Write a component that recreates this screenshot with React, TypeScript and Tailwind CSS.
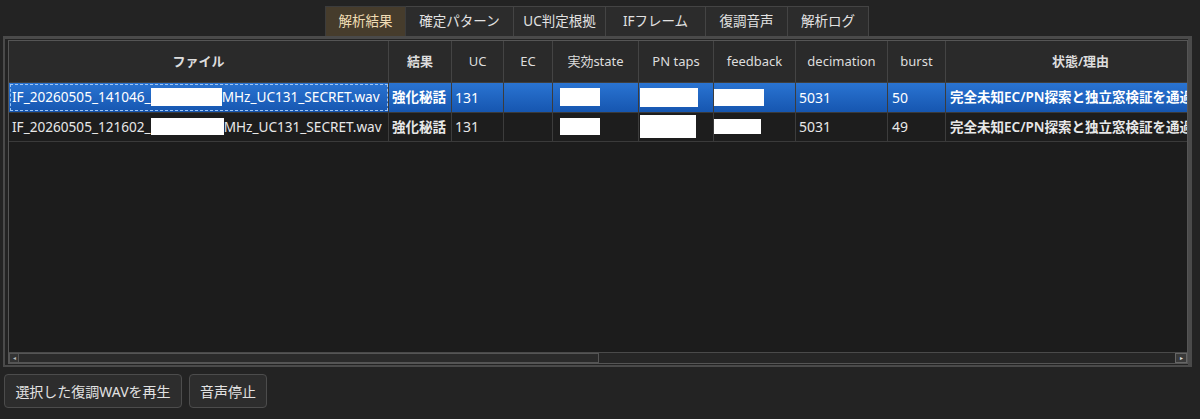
import React from 'react'

const font = { fontFamily: '"Noto Sans", "Noto Sans CJK JP", sans-serif' }

const tabs = ['解析結果', '確定パターン', 'UC判定根拠', 'IFフレーム', '復調音声', '解析ログ']
const tabWidths = ['w-[81px]', 'w-[108px]', 'w-[92px]', 'w-[100px]', 'w-[82px]', 'w-[81px]']

const cols = [
  { label: 'ファイル', w: 'w-[380px]', bold: true },
  { label: '結果', w: 'w-[63px]', bold: true },
  { label: 'UC', w: 'w-[52px]' },
  { label: 'EC', w: 'w-[49px]' },
  { label: '実効state', w: 'w-[86px]' },
  { label: 'PN taps', w: 'w-[75px]' },
  { label: 'feedback', w: 'w-[82px]' },
  { label: 'decimation', w: 'w-[92px]' },
  { label: 'burst', w: 'w-[58px]' },
  { label: '状態/理由', w: 'w-[270px]', bold: true },
]

const rows = [
  { time: '141046', burst: '50', selected: true, redact: ['w-[71px] h-[18px]', 'w-[40px] h-[18px]', 'w-[58px] h-[19px]', 'w-[50px] h-[17px]'] },
  { time: '121602', burst: '49', selected: false, redact: ['w-[73px] h-[17px]', 'w-[40px] h-[17px]', 'w-[56px] h-[23px]', 'w-[47px] h-[15px]'] },
]

function Blank({ cls }: { cls: string }) {
  return <span className={`inline-block bg-white align-middle ${cls}`} />
}

export default function App() {
  return (
    <div className="w-[1200px] h-[419px] bg-[#232323] text-[#e4e4e4] text-[13px] overflow-hidden" style={font}>
      {/* tabs */}
      <div className="flex pl-[325px] pt-[6px] h-[36px]">
        {tabs.map((t, i) => (
          <div
            key={t}
            className={`${tabWidths[i]} flex items-center justify-center border border-b-0 text-[13.5px] ${
              i === 0
                ? 'bg-[#463c2c] text-[#f0dcb4] border-[#3c3c3c]'
                : 'bg-[#2c2c2c] text-[#e2e2e2] border-[#444444] border-l-0'
            }`}
          >
            {t}
          </div>
        ))}
      </div>

      {/* pane */}
      <div className="ml-[3px] w-[1189px] h-[331px] border-t-[3px] border-l-[2px] border-r-[4px] border-b-[2px] border-[#4a4a4a] bg-[#232323] pt-[1px] pl-[3px] pr-0">
        <div className="w-[1180px] h-[324px] border border-[#555] bg-[#1c1c1c] flex flex-col overflow-hidden">
          {/* header */}
          <div className="flex h-[42px] bg-[#2a2a2a] border-b border-[#3e3e3e] shrink-0">
            {cols.map((c) => (
              <div
                key={c.label}
                className={`${c.w} shrink-0 flex items-center justify-center border-r border-[#444] text-[#dddddd] ${c.bold ? 'font-semibold' : ''}`}
              >
                {c.label}
              </div>
            ))}
          </div>

          {/* rows */}
          {rows.map((r) => (
            <div
              key={r.time}
              className={`flex h-[29.5px] shrink-0 border-b border-[#3a3a3a] text-[14px] ${
                r.selected ? 'bg-gradient-to-b from-[#2a74d2] to-[#1656b0] text-white' : 'bg-[#1d1d1d] text-[#e8e8e8]'
              }`}
            >
              <div className={`${cols[0].w} shrink-0 flex items-center pl-[3px] border-r border-[#3c3c3c] whitespace-nowrap overflow-hidden text-[13.6px] ${r.selected ? 'outline-1 outline-dashed outline-[#9cc4f4] -outline-offset-2' : ''}`}>
                IF_20260505_{r.time}_<Blank cls={r.redact[0]} />MHz_UC131_SECRET.wav
              </div>
              <div className={`${cols[1].w} shrink-0 flex items-center pl-[3px] border-r border-[#3c3c3c] font-semibold text-[13.5px]`}>強化秘話</div>
              <div className={`${cols[2].w} shrink-0 flex items-center pl-[3px] border-r border-[#3c3c3c]`}>131</div>
              <div className={`${cols[3].w} shrink-0 border-r border-[#3c3c3c]`} />
              <div className={`${cols[4].w} shrink-0 flex items-center pl-[7px] border-r border-[#3c3c3c]`}><Blank cls={r.redact[1]} /></div>
              <div className={`${cols[5].w} shrink-0 flex items-center pl-[1px] border-r border-[#3c3c3c]`}><Blank cls={r.redact[2]} /></div>
              <div className={`${cols[6].w} shrink-0 flex items-center pl-0 border-r border-[#3c3c3c]`}><Blank cls={r.redact[3]} /></div>
              <div className={`${cols[7].w} shrink-0 flex items-center pl-[3px] border-r border-[#3c3c3c]`}>5031</div>
              <div className={`${cols[8].w} shrink-0 flex items-center pl-[4px] border-r border-[#3c3c3c]`}>{r.burst}</div>
              <div className={`${cols[9].w} shrink-0 flex items-center pl-[4px] whitespace-nowrap font-semibold text-[13.5px]`}>
                完全未知EC/PN探索と独立窓検証を通過
              </div>
            </div>
          ))}

          <div className="flex-1" />

          {/* horizontal scrollbar */}
          <div className="h-[11px] shrink-0 flex items-stretch bg-[#262626] border-t border-[#4a4a4a]">
            <div className="w-[10px] flex items-center justify-center bg-[#333] border border-[#555] text-[6px] text-[#bbb]">◂</div>
            <div className="w-[580px] bg-[#2a2a2a] border border-[#555] border-l-0" />
            <div className="flex-1" />
            <div className="w-[12px] flex items-center justify-center bg-[#3a3a3a] border border-[#666] text-[6px] text-[#ddd]">▸</div>
          </div>
        </div>
      </div>

      {/* buttons */}
      <div className="flex gap-[7px] pl-[4px] pt-[7px]">
        <button className="w-[178px] h-[34px] bg-[#2d2d2d] border border-[#4c4c4c] rounded-[4px] text-[14px] text-[#e2e2e2]">
          選択した復調WAVを再生
        </button>
        <button className="w-[78px] h-[34px] bg-[#2d2d2d] border border-[#4c4c4c] rounded-[4px] text-[14px] text-[#e2e2e2]">
          音声停止
        </button>
      </div>
    </div>
  )
}
